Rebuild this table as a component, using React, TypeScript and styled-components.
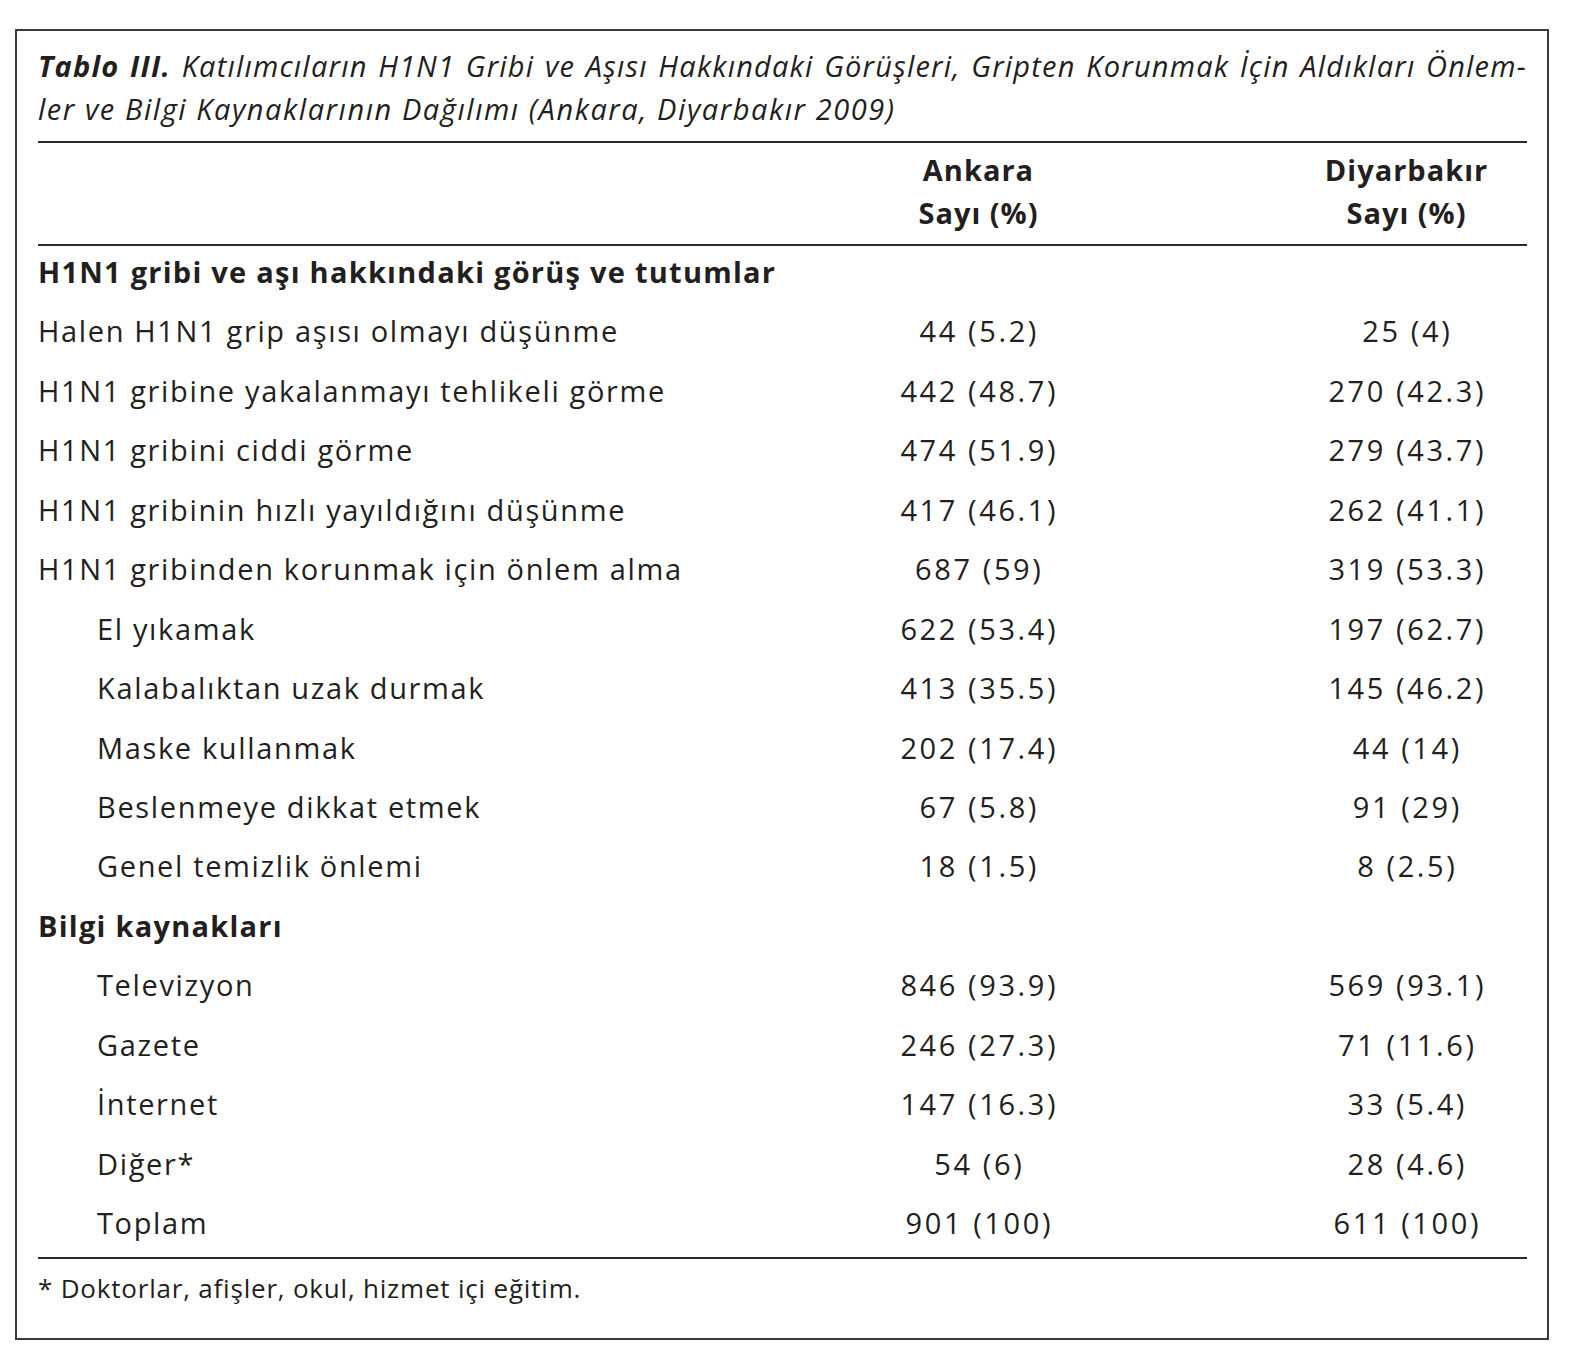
import React from "react";
import styled, { createGlobalStyle } from "styled-components";

const Global = createGlobalStyle`
  html, body { margin: 0; padding: 0; background: #ffffff; }
  body { font-family: "Open Sans", "Noto Sans", sans-serif; color: #231f20; }
`;

const Frame = styled.div`
  box-sizing: border-box;
  margin: 29px 0 0 15px;
  width: 1534px;
  height: 1311px;
  border: 2px solid #3a3a3a;
  padding: 13px 20px 0 21px;
`;

const Caption = styled.div`
  font-style: italic;
  font-size: 29px;
  line-height: 43px;
`;

const CaptionLine = styled.div<{ $justify?: boolean }>`
  white-space: nowrap;
  letter-spacing: ${(p) => (p.$justify ? 1.2 : 1.55)}px;
  text-align: ${(p) => (p.$justify ? "justify" : "left")};
  text-align-last: ${(p) => (p.$justify ? "justify" : "left")};
`;

const Strong = styled.span`
  font-weight: 700;
`;

const Rule = styled.div<{ $top?: number }>`
  height: 2px;
  background: #2b2b2b;
  margin-top: ${(p) => p.$top ?? 0}px;
`;

const Grid = styled.div`
  display: grid;
  grid-template-columns: minmax(0, 1fr) 242px 242px;
  column-gap: 186px;
`;

const Head = styled(Grid)`
  padding: 5px 0 10px;
  font-size: 29px;
  font-weight: 700;
  line-height: 43px;
  letter-spacing: 1px;
`;

const HeadCell = styled.div`
  text-align: center;
  white-space: nowrap;
  padding-left: 1px;
`;

const Body = styled(Grid)`
  row-gap: 7.45px;
  padding: 0 0 8px;
  font-size: 29px;
  line-height: 52px;
`;

const Label = styled.div<{ $indent?: boolean; $bold?: boolean }>`
  white-space: nowrap;
  padding-left: ${(p) => (p.$indent ? 59 : 0)}px;
  font-weight: ${(p) => (p.$bold ? 700 : 400)};
  letter-spacing: ${(p) => (p.$bold ? 1.25 : 1.65)}px;
`;

const Value = styled.div`
  text-align: center;
  white-space: nowrap;
  letter-spacing: 2.6px;
  padding-left: 2.6px;
`;

const Footnote = styled.div`
  font-size: 26px;
  line-height: 40px;
  padding-top: 9px;
  letter-spacing: 0.8px;
`;

type Row =
  | { kind: "section"; label: string }
  | { kind: "row"; label: string; a: string; d: string; indent?: boolean };

const rows: Row[] = [
  { kind: "section", label: "H1N1 gribi ve aşı hakkındaki görüş ve tutumlar" },
  { kind: "row", label: "Halen H1N1 grip aşısı olmayı düşünme", a: "44 (5.2)", d: "25 (4)" },
  { kind: "row", label: "H1N1 gribine yakalanmayı tehlikeli görme", a: "442 (48.7)", d: "270 (42.3)" },
  { kind: "row", label: "H1N1 gribini ciddi görme", a: "474 (51.9)", d: "279 (43.7)" },
  { kind: "row", label: "H1N1 gribinin hızlı yayıldığını düşünme", a: "417 (46.1)", d: "262 (41.1)" },
  { kind: "row", label: "H1N1 gribinden korunmak için önlem alma", a: "687 (59)", d: "319 (53.3)" },
  { kind: "row", label: "El yıkamak", a: "622 (53.4)", d: "197 (62.7)", indent: true },
  { kind: "row", label: "Kalabalıktan uzak durmak", a: "413 (35.5)", d: "145 (46.2)", indent: true },
  { kind: "row", label: "Maske kullanmak", a: "202 (17.4)", d: "44 (14)", indent: true },
  { kind: "row", label: "Beslenmeye dikkat etmek", a: "67 (5.8)", d: "91 (29)", indent: true },
  { kind: "row", label: "Genel temizlik önlemi", a: "18 (1.5)", d: "8 (2.5)", indent: true },
  { kind: "section", label: "Bilgi kaynakları" },
  { kind: "row", label: "Televizyon", a: "846 (93.9)", d: "569 (93.1)", indent: true },
  { kind: "row", label: "Gazete", a: "246 (27.3)", d: "71 (11.6)", indent: true },
  { kind: "row", label: "İnternet", a: "147 (16.3)", d: "33 (5.4)", indent: true },
  { kind: "row", label: "Diğer*", a: "54 (6)", d: "28 (4.6)", indent: true },
  { kind: "row", label: "Toplam", a: "901 (100)", d: "611 (100)", indent: true },
];

export default function App() {
  return (
    <>
      <Global />
      <Frame>
        <Caption>
          <CaptionLine $justify>
            <Strong>Tablo III.</Strong> Katılımcıların H1N1 Gribi ve Aşısı Hakkındaki Görüşleri, Gripten Korunmak İçin Aldıkları Önlem-
          </CaptionLine>
          <CaptionLine>ler ve Bilgi Kaynaklarının Dağılımı (Ankara, Diyarbakır 2009)</CaptionLine>
        </Caption>
        <Rule $top={11} />
        <Head>
          <div />
          <HeadCell>
            Ankara
            <br />
            Sayı (%)
          </HeadCell>
          <HeadCell>
            Diyarbakır
            <br />
            Sayı (%)
          </HeadCell>
        </Head>
        <Rule />
        <Body>
          {rows.map((r, i) =>
            r.kind === "section" ? (
              <React.Fragment key={i}>
                <Label $bold>{r.label}</Label>
                <Value />
                <Value />
              </React.Fragment>
            ) : (
              <React.Fragment key={i}>
                <Label $indent={r.indent}>{r.label}</Label>
                <Value>{r.a}</Value>
                <Value>{r.d}</Value>
              </React.Fragment>
            )
          )}
        </Body>
        <Rule />
        <Footnote>* Doktorlar, afişler, okul, hizmet içi eğitim.</Footnote>
      </Frame>
    </>
  );
}
